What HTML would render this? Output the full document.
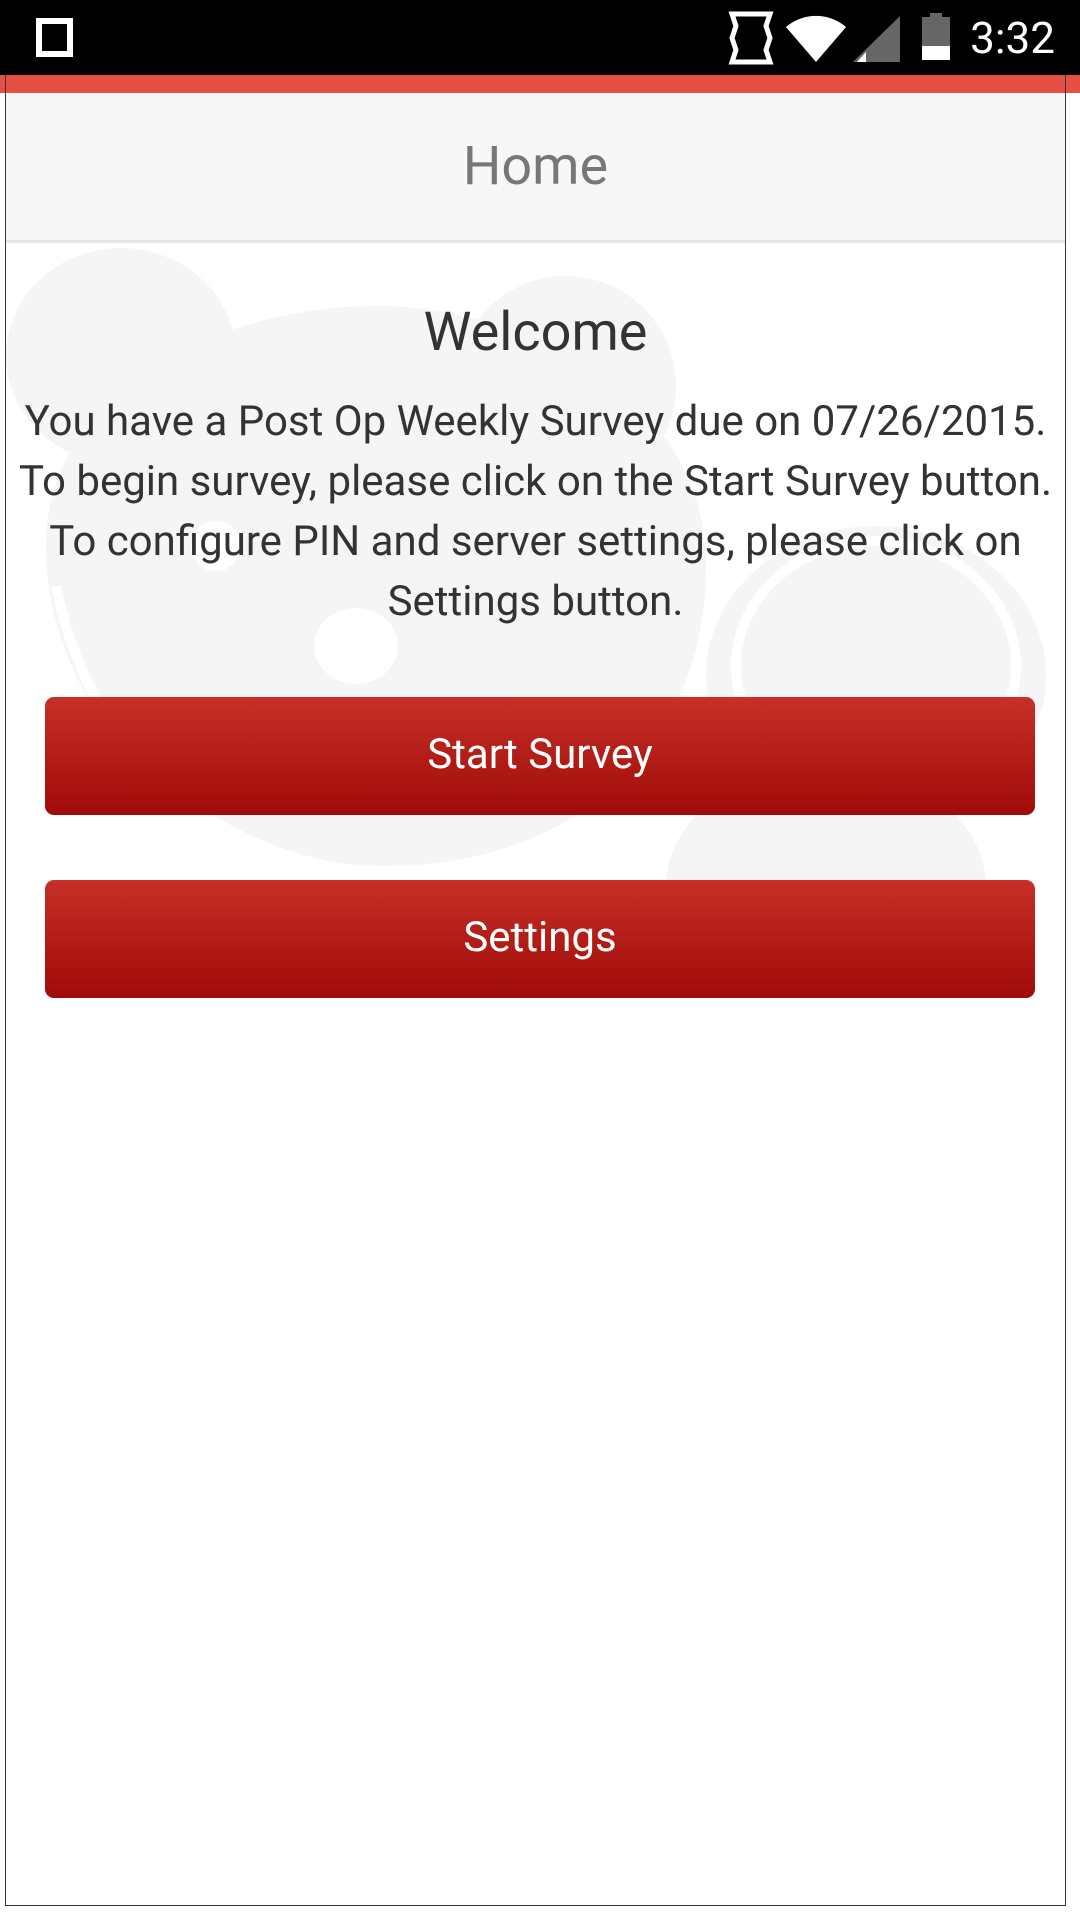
<!DOCTYPE html>
<html><head><meta charset="utf-8"><style>
*{margin:0;padding:0;box-sizing:border-box}
body{width:1080px;height:1920px;background:#fff;position:relative;overflow:hidden;font-family:"Roboto","Liberation Sans",sans-serif}
.sb{position:absolute;left:0;top:0;width:1080px;height:75px;background:#000}
.frame{position:absolute;left:5px;top:75px;width:1061px;height:1831px;border:1px solid #333;border-top:none}
.red{position:absolute;left:0;top:75px;width:1080px;height:18px;background:#e55042}
.hdr{position:absolute;left:6px;top:93px;width:1059px;height:150px;background:#f7f7f7;border-bottom:3px solid #e6e6e6;text-align:center;line-height:147px;font-size:54px;color:#777}
.wm{position:absolute;left:6px;top:246px}
.t{position:absolute;left:6px;width:1059px;text-align:center;color:#333}
.btn{position:absolute;left:45px;width:990px;height:118px;border-radius:9px;background:linear-gradient(#c63027,#a00b09);color:#fff;font-size:42px;text-align:center;line-height:116px}
</style></head><body>
<div class="sb">
<svg width="1080" height="75" style="position:absolute;left:0;top:0">
<rect x="39" y="21" width="31" height="33" fill="none" stroke="#fff" stroke-width="6"/>
<path d="M732 14h38l-4 12 4 12-4 12 4 12h-38l4-12-4-12 4-12z" fill="none" stroke="#fff" stroke-width="5"/>
<path d="M786 27a46 46 0 0 1 60 0l-30 35z" fill="#fff"/>
<path d="M900 16v46h-47z" fill="#666"/><path d="M866 52v10h-9z" fill="#fff"/>
<rect x="922" y="17" width="28" height="43" fill="#666"/><rect x="922" y="46" width="28" height="14" fill="#fff"/><rect x="930" y="13" width="12" height="5" fill="#666"/>
<text x="1055" y="53" text-anchor="end" fill="#fff" font-size="44" font-family="Roboto,Liberation Sans,sans-serif">3:32</text>
</svg></div>
<div class="red"></div>
<div class="hdr">Home</div>
<svg class="wm" width="1059" height="660" viewBox="0 0 1059 660">
<g fill="#f5f5f5">
<ellipse cx="115" cy="110" rx="115" ry="108"/>
<ellipse cx="560" cy="140" rx="110" ry="110"/>
<path d="M40 300c0-160 180-240 330-240s330 90 330 260c0 180-130 300-320 300S40 470 40 300z"/>
<ellipse cx="870" cy="430" rx="170" ry="150"/>
<ellipse cx="820" cy="640" rx="160" ry="120"/>
</g>
<g fill="none" stroke="#fff" stroke-width="10">
<ellipse cx="870" cy="420" rx="140" ry="125"/>
<path d="M50 340c40 200 200 300 400 290"/>
</g>
<g fill="#fff"><ellipse cx="350" cy="400" rx="42" ry="38"/><ellipse cx="210" cy="300" rx="25" ry="25"/></g>
</svg>
<div class="t" style="top:298px;font-size:54px;line-height:70px">Welcome</div>
<div class="t" style="top:392px;font-size:42px;line-height:60px">You have a Post Op Weekly Survey due on 07/26/2015.<br>To begin survey, please click on the Start Survey button.<br>To configure PIN and server settings, please click on<br>Settings button.</div>
<div class="btn" style="top:697px">Start Survey</div>
<div class="btn" style="top:880px">Settings</div>
<div class="frame"></div>
</body></html>
